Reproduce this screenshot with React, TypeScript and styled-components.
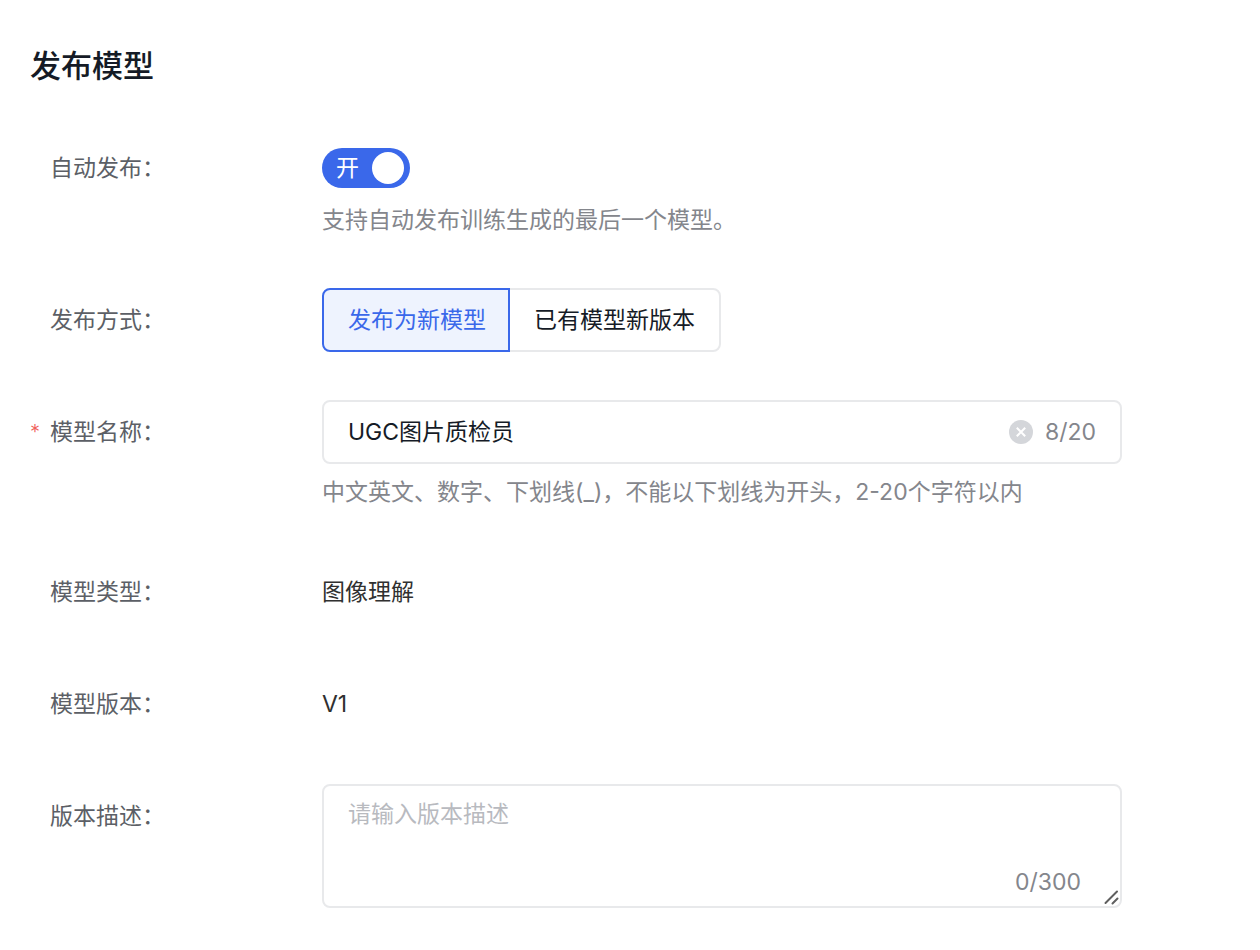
import React, { useState } from "react";
import styled, { createGlobalStyle } from "styled-components";

const GlobalStyle = createGlobalStyle`
  *, *::before, *::after { box-sizing: border-box; }
  body {
    margin: 0;
    background: #fff;
    color: #151b26;
    font-family: Inter, "Noto Sans CJK SC", sans-serif;
    font-size: 23px;
    line-height: 40px;
  }
  input, textarea, button { font: inherit; color: inherit; }
`;

const Page = styled.main`
  padding: 36px 30px 40px;
`;

const Title = styled.h1`
  margin: 0 0 40px;
  font-size: 31px;
  line-height: 60px;
  font-weight: 500;
`;

const Form = styled.form`
  display: flex;
  flex-direction: column;
  gap: 48px;
`;

const Row = styled.div`
  display: flex;
  align-items: flex-start;
`;

const labelStyle = `
  display: flex;
  flex: 0 0 292px;
  line-height: 64px;
  color: #5c5f66;
`;

const Label = styled.label`
  ${labelStyle}
`;

const Caption = styled.span`
  ${labelStyle}
`;

const Mark = styled.span`
  width: 20px;
  font-size: 20px;
  font-weight: 300;
  color: #f0605a;
`;

const Control = styled.div`
  flex: 1;
  min-width: 0;
  max-width: 800px;
`;

const Help = styled.p<{ $gap: number }>`
  margin: ${(p) => p.$gap}px 0 0;
  color: #84868c;
`;

const Value = styled.div`
  line-height: 64px;
  color: #303030;
`;

const Switch = styled.label`
  display: flex;
  align-items: center;
  justify-content: space-between;
  width: 88px;
  height: 40px;
  margin-top: 12px;
  padding: 0 6px 0 14px;
  border-radius: 20px;
  background: #3a68ea;
  color: #fff;
  cursor: pointer;

  &:has(input:not(:checked)) {
    flex-direction: row-reverse;
    padding: 0 14px 0 6px;
    background: #b8babf;
  }
`;

const Knob = styled.input`
  appearance: none;
  width: 32px;
  height: 32px;
  margin: 0;
  border-radius: 50%;
  background: #fff;
  cursor: pointer;
`;

const Segments = styled.div`
  display: flex;
`;

const Segment = styled.label`
  display: flex;
  align-items: center;
  height: 64px;
  padding: 0 24px;
  border: 2px solid #e8e9eb;
  cursor: pointer;

  &:first-child {
    padding-right: 22px;
    border-radius: 8px 0 0 8px;
  }
  &:last-child { border-radius: 0 8px 8px 0; }
  & + & { margin-left: -2px; }

  &:has(input:checked) {
    z-index: 1;
    border-color: #3a68ea;
    background: #eef3fe;
    color: #3a68ea;
  }
`;

const HiddenRadio = styled.input`
  appearance: none;
  width: 0;
  height: 0;
  margin: 0;
`;

const Field = styled.div`
  display: flex;
  align-items: center;
  gap: 12px;
  height: 64px;
  padding: 0 24px;
  border: 2px solid #e8e9eb;
  border-radius: 8px;
`;

const TextInput = styled.input`
  flex: 1;
  min-width: 0;
  padding: 0;
  border: 0;
  outline: 0;
  background: none;
`;

const ClearButton = styled.button`
  display: flex;
  padding: 0;
  border: 0;
  background: none;
  cursor: pointer;
`;

const Count = styled.span`
  color: #84868c;
`;

const AreaField = styled.div`
  position: relative;
  height: 124px;
  border: 2px solid #e8e9eb;
  border-radius: 8px;
`;

const TextArea = styled.textarea`
  display: block;
  width: 100%;
  height: 80px;
  padding: 8px 24px;
  border: 0;
  outline: 0;
  resize: none;
  background: none;

  &::placeholder { color: #b8babf; opacity: 1; }
`;

const AreaCount = styled(Count)`
  display: block;
  padding-right: 39px;
  line-height: 32px;
  text-align: right;
`;

const Grip = styled.svg`
  position: absolute;
  right: 0;
  bottom: 0;
`;

export default function App() {
  const [auto, setAuto] = useState(true);
  const [mode, setMode] = useState("new");
  const [name, setName] = useState("UGC图片质检员");
  const [note, setNote] = useState("");

  return (
    <>
      <GlobalStyle />
      <Page>
        <Title>发布模型</Title>
        <Form onSubmit={(e) => e.preventDefault()}>
          <Row>
            <Label htmlFor="auto"><Mark />自动发布：</Label>
            <Control>
              <Switch>
                {auto ? "开" : "关"}
                <Knob id="auto" type="checkbox" role="switch" checked={auto} onChange={(e) => setAuto(e.target.checked)} />
              </Switch>
              <Help $gap={12}>支持自动发布训练生成的最后一个模型。</Help>
            </Control>
          </Row>
          <Row>
            <Caption id="mode"><Mark />发布方式：</Caption>
            <Control>
              <Segments role="radiogroup" aria-labelledby="mode">
                <Segment>
                  <HiddenRadio type="radio" name="mode" checked={mode === "new"} onChange={() => setMode("new")} />
                  发布为新模型
                </Segment>
                <Segment>
                  <HiddenRadio type="radio" name="mode" checked={mode === "version"} onChange={() => setMode("version")} />
                  已有模型新版本
                </Segment>
              </Segments>
            </Control>
          </Row>
          <Row>
            <Label htmlFor="name"><Mark>*</Mark>模型名称：</Label>
            <Control>
              <Field>
                <TextInput id="name" type="text" maxLength={20} value={name} onChange={(e) => setName(e.target.value)} />
                <ClearButton type="button" aria-label="清空" onClick={() => setName("")}>
                  <svg width="24" height="24" viewBox="0 0 24 24">
                    <circle cx="12" cy="12" r="12" fill="#d4d6da" />
                    <path d="M7.8 7.8l8.4 8.4M16.2 7.8l-8.4 8.4" stroke="#fff" strokeWidth="2" />
                  </svg>
                </ClearButton>
                <Count>{name.length}/20</Count>
              </Field>
              <Help $gap={8}>中文英文、数字、下划线(_)，不能以下划线为开头，2-20个字符以内</Help>
            </Control>
          </Row>
          <Row>
            <Caption><Mark />模型类型：</Caption>
            <Control><Value>图像理解</Value></Control>
          </Row>
          <Row>
            <Caption><Mark />模型版本：</Caption>
            <Control><Value>V1</Value></Control>
          </Row>
          <Row>
            <Label htmlFor="note"><Mark />版本描述：</Label>
            <Control>
              <AreaField>
                <TextArea id="note" maxLength={300} placeholder="请输入版本描述" value={note} onChange={(e) => setNote(e.target.value)} />
                <AreaCount>{note.length}/300</AreaCount>
                <Grip width="18" height="18" viewBox="0 0 18 18" aria-hidden="true">
                  <path d="M3.5 15L15 3.5M10.5 15.5L15.5 10.5" stroke="#5f5f5f" strokeWidth="2" strokeLinecap="round" />
                </Grip>
              </AreaField>
            </Control>
          </Row>
        </Form>
      </Page>
    </>
  );
}
